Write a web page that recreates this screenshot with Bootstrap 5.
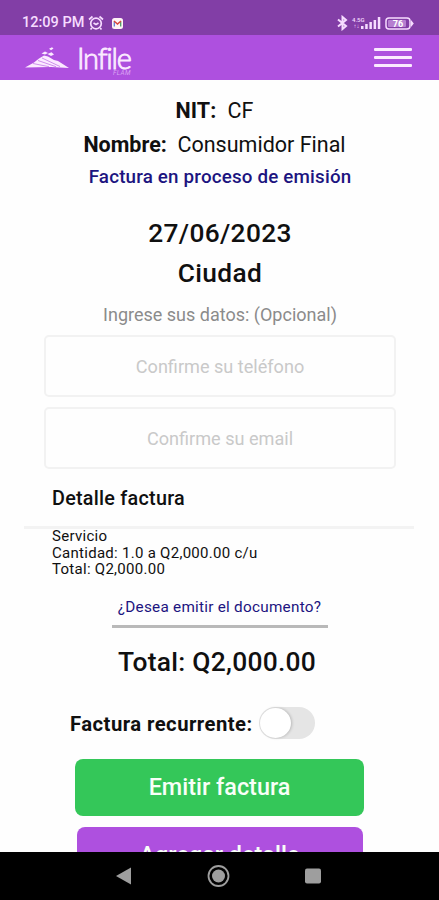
<!DOCTYPE html>
<html lang="es">
<head>
<meta charset="utf-8">
<meta name="viewport" content="width=device-width, initial-scale=1">
<title>Infile - Factura</title>
<link href="https://cdn.jsdelivr.net/npm/bootstrap@5.3.0/dist/css/bootstrap.min.css" rel="stylesheet">
<style>
  body { font-family: Roboto, "Liberation Sans", sans-serif; color: #101010; background: #fefefe; white-space: nowrap; }
  .status { height: 35px; background: #823ea6; color: #f6dcff; padding: 11px 25px 0 22px; font-size: 14.5px; font-weight: 500; line-height: 24px; }
  .topbar { height: 45px; background: #ae50df; padding: 0 27px 0 24px; }
  .alarm { margin-left: 4px; }
  .net-text { font-size: 6px; line-height: 6px; width: 17px; }
  .net-bars { margin-left: -8px; }
  .brand-name { font-family: Lato, sans-serif; font-size: 29px; line-height: 22px; letter-spacing: -1.2px; color: #fbeaff; font-weight: 300; -webkit-text-stroke: .9px #fbeaff; margin-left: -1px; }
  .brand-sub { right: 0; bottom: -8px; font-size: 6.5px; line-height: 7px; letter-spacing: .3px; color: #d9a3f2; font-style: italic; }
  .menu-btn { width: 38px; height: 19px; }
  .menu-btn span { height: 3px; background: #fbeaff; border-radius: 1px; }
  .content { padding-top: 14px; }
  .r-nit { line-height: 33px; font-size: 21.5px; letter-spacing: .12px; padding-right: 10px; }
  .r-name { line-height: 35px; font-size: 21.5px; padding-right: 10px; }
  .navy { color: #1c1480; }
  .r-state { line-height: 30px; font-size: 18.8px; letter-spacing: .18px; font-weight: 500; margin-bottom: 21px; padding-left: 1px; }
  .r-big { line-height: 40px; font-size: 26.3px; font-weight: 500; letter-spacing: .35px; padding-left: 1px; }
  .r-hint { line-height: 40px; font-size: 18px; color: #8b8b8b; margin-top: 2px; padding-left: 1px; }
  .field-group { padding-left: 1px; }
  .field { width: 352px; height: 62px; border: 2px solid #f2f2f2; border-radius: 5px; font-size: 18.1px; padding: 1px 0 0; background: #fefefe; }
  .field-next { margin-top: 10px; }
  .field::placeholder { color: #c9c9c9; opacity: 1; }
  .r-head { line-height: 59px; font-size: 19.8px; letter-spacing: .25px; font-weight: 500; padding-left: 52px; height: 57px; }
  .rule { height: 3px; margin: 0 25px 0 24px; background: #f3f3f3; }
  .r-items { font-size: 15px; letter-spacing: .28px; line-height: 16.5px; padding-left: 52px; margin-top: -1px; height: 64px; }
  .r-ask { width: 216px; height: 36px; line-height: 31px; font-size: 15.3px; letter-spacing: .25px; border-bottom: 3px solid #b9b9b9; }
  .r-total { line-height: 42px; height: 40px; font-size: 26.4px; letter-spacing: .25px; margin-top: 13px; font-weight: 500; padding-right: 5px; }
  .r-rec { margin-top: 26px; height: 32px; padding-left: 70px; font-size: 20.3px; letter-spacing: .45px; }
  .r-rec b { padding-top: 2px; }
  .toggle { width: 56px; height: 32px; border-radius: 16px; background: #e5e5e5; margin-left: 6px; padding: 1px; }
  .toggle span { width: 31px; height: 30px; border-radius: 50%; background: #fff; box-shadow: 1px 0 3px #0003; }
  .act { height: 57px; border: 0; border-radius: 8px; font-size: 23.4px; font-weight: 500; color: #f8fff8; padding: 1px 0 0; }
  .act-go { width: 289px; background: #34c759; margin-top: 20px; }
  .act-add { width: 286px; background: #ae50df; margin-top: 11px; }
  .sysbar { height: 48px; background: #000; padding-right: 2px; }
</style>
</head>
<body>
<div class="vh-100 d-flex flex-column overflow-hidden">
  <div class="status d-flex align-items-center justify-content-between flex-shrink-0">
    <div class="d-flex align-items-center">
      <span>12:09 PM</span>
      <svg class="alarm" width="16" height="16" viewBox="0 0 16 16" fill="none" stroke="#f6dcff" stroke-width="1.7"><circle cx="8" cy="8.500" r="5.300"/><path d="M1 4.500 4.500 1.500M15 4.500 11.500 1.500M3.800 13 2.500 14.500M12.200 13l1.300 1.500M5.500 8 8 9.500 10.500 8"/></svg>
      <svg class="ms-2" width="11" height="11" viewBox="0 0 11 11"><rect width="11" height="11" rx="2.500" fill="#fff3f5"/><path d="M2.300 8.500V3.500" stroke="#5b7fd8" stroke-width="1.300"/><path d="M8.700 8.500V3.500" stroke="#4b9e62" stroke-width="1.300"/><path d="M2 3l3.500 3L9 3" fill="none" stroke="#d8473c" stroke-width="1.500"/></svg>
    </div>
    <div class="d-flex align-items-center">
      <svg width="11" height="16" viewBox="0 0 11 16" fill="none" stroke="#f6dcff" stroke-width="2"><path d="M1 4.500 9 11 5.500 14V2L9 5 1 11.500"/></svg>
      <div class="net-text ms-1"><div>4.5G</div><div>&nbsp;&#8593;&#8595;</div></div>
      <svg class="net-bars" width="20" height="12" viewBox="0 0 20 12" fill="#f6dcff"><path d="M0 9h2.500v3H0zM4.200 7h2.500v5H4.200zM8.400 5h2.500v7H8.400zM12.600 3h2.500v9h-2.500zM16.800 0h2.500v12h-2.500z"/></svg>
      <svg class="ms-1" width="29" height="13" viewBox="0 0 29 13"><rect x="1" y="1" width="24" height="11" rx="3" fill="none" stroke="#f6dcff" stroke-width="1.500"/><path d="M26 3 28.800 6.500 26 10z" fill="#f6dcff"/><rect x="3" y="3" width="18" height="7" rx="1" fill="#b67fd0"/><text x="13" y="9.800" text-anchor="middle" font-size="9" font-weight="700" fill="#fff">76</text></svg>
    </div>
  </div>

  <nav class="topbar d-flex align-items-center justify-content-between flex-shrink-0">
    <div class="d-flex align-items-center">
      <svg width="46" height="24" viewBox="0 0 46 24" fill="#fbeaff"><path d="M1 21.500 10 16.500 15 12.500 20 9.500 24 10.500 30 14 34 15 45 22 27 21z"/><path d="M9 17.500l16 3.200M14 14.500l18 6.200M18 12l18 8.500" stroke="#ae50df" stroke-width=".6" fill="none"/><path d="M17.500 7.500l3.500-2 3 1.500-3 1.600zM25 2.800l3-1.600L29.500 2.500 27 4.200zM23.500 8l4-1.800 2.500 2.300-3 1.500z"/></svg>
      <div class="position-relative ms-2"><span class="brand-name d-block">Infile</span><span class="brand-sub position-absolute">FLAM</span></div>
    </div>
    <div class="menu-btn d-flex flex-column justify-content-between" role="button" aria-label="Menú"><span></span><span></span><span></span></div>
  </nav>

  <main class="content flex-grow-1 overflow-hidden d-flex flex-column align-items-stretch text-center">
    <div class="r-nit flex-shrink-0"><b>NIT:</b>&nbsp; CF</div>
    <div class="r-name flex-shrink-0"><b>Nombre:</b>&nbsp; Consumidor Final</div>
    <div class="r-state navy flex-shrink-0">Factura en proceso de emisión</div>
    <div class="r-big flex-shrink-0">27/06/2023</div>
    <div class="r-big flex-shrink-0">Ciudad</div>
    <div class="r-hint flex-shrink-0">Ingrese sus datos: (Opcional)</div>
    <div class="field-group d-flex flex-column align-items-center flex-shrink-0">
      <input class="field form-control text-center" type="tel" placeholder="Confirme su teléfono">
      <input class="field field-next form-control text-center" type="email" placeholder="Confirme su email">
    </div>
    <div class="r-head text-start flex-shrink-0">Detalle factura</div>
    <div class="rule flex-shrink-0"></div>
    <div class="r-items text-start flex-shrink-0">
      <div>Servicio</div><div>Cantidad: 1.0 a Q2,000.00 c/u</div><div>Total: Q2,000.00</div>
    </div>
    <div class="r-ask navy align-self-center flex-shrink-0">¿Desea emitir el documento?</div>
    <div class="r-total flex-shrink-0">Total: Q2,000.00</div>
    <div class="r-rec d-flex align-items-center flex-shrink-0"><b>Factura recurrente:</b><div class="toggle d-flex" role="switch" aria-checked="false"><span></span></div></div>
    <button class="act act-go btn align-self-center flex-shrink-0">Emitir factura</button>
    <button class="act act-add btn align-self-center flex-shrink-0">Agregar detalle</button>
  </main>

  <div class="sysbar flex-shrink-0 d-flex align-items-center justify-content-center">
    <svg width="210" height="24" viewBox="0 0 210 24" fill="#9e9e9e"><path d="M2 12 17 3.500v17z"/><circle cx="104.500" cy="12" r="10" fill="none" stroke="#9e9e9e" stroke-width="1.800"/><circle cx="104.500" cy="12" r="6.500"/><rect x="191" y="4.500" width="16" height="15" rx="2"/></svg>
  </div>
</div>
<script src="https://cdn.jsdelivr.net/npm/bootstrap@5.3.0/dist/js/bootstrap.bundle.min.js"></script>
</body>
</html>
